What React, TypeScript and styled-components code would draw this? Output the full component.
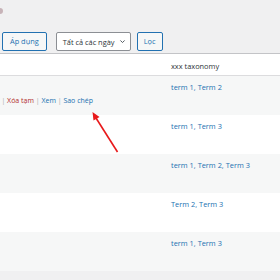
import React from 'react';
import styled, { createGlobalStyle } from 'styled-components';

const GlobalStyle = createGlobalStyle`
  html, body {
    margin: 0;
    padding: 0;
    background: #f0f0f1;
    overflow: hidden;
  }
  body {
    width: 280px;
    height: 280px;
    font-family: "Open Sans", "Noto Sans", "Liberation Sans", sans-serif;
    font-size: 7.4px;
    color: #3c434a;
  }
`;

const Page = styled.div`
  position: relative;
  width: 280px;
  height: 280px;
  overflow: hidden;
`;

const TopStrip = styled.div`
  height: 32px;
  position: relative;
`;

const Bubble = styled.span`
  position: absolute;
  left: -4px;
  top: 8px;
  width: 7px;
  height: 6px;
  border-radius: 3px;
  background: #c7b3b8;
`;

const Toolbar = styled.div`
  display: flex;
  align-items: center;
  padding-left: 2px;
  height: 19px;
  margin-bottom: 2px;
`;

const Button = styled.button<{ gapLeft?: number }>`
  height: 19px;
  box-sizing: border-box;
  padding: 0 ${p => (p.gapLeft ? 6 : 7)}px;
  margin-left: ${p => p.gapLeft ?? 0}px;
  border: 1px solid #2271b1;
  border-radius: 2px;
  background: #f6f7f7;
  color: #2271b1;
  font-family: inherit;
  font-size: 7.4px;
  line-height: 17px;
  white-space: nowrap;
`;

const Select = styled.div`
  display: flex;
  align-items: center;
  justify-content: space-between;
  height: 19px;
  width: 75px;
  box-sizing: border-box;
  margin-left: 9px;
  padding: 0 4px 0 6px;
  border: 1px solid #8c8f94;
  border-radius: 2px;
  background: #fff;
  color: #2c3338;
  white-space: nowrap;
`;

const Table = styled.div`
  background: #fff;
  border-top: 1px solid #c3c4c7;
  margin-left: -120px;
`;

const HeaderRow = styled.div`
  display: grid;
  grid-template-columns: 286px 1fr;
  height: 21px;
  border-bottom: 1px solid #dcdcde;
`;

const HeaderCell = styled.div`
  padding: 7px 5px 0;
  line-height: 10px;
  color: #2c3338;
`;

const Row = styled.div<{ striped: boolean; h: number }>`
  display: grid;
  grid-template-columns: 286px 1fr;
  height: ${p => p.h}px;
  background: ${p => (p.striped ? '#f6f7f7' : '#fff')};
`;

const Cell = styled.div`
  padding: 6px 5px 0;
  line-height: 10px;
`;

const TermLinks = styled.span`
  color: #2271b1;
`;

const Actions = styled.div`
  margin-top: 4px;
  text-align: right;
  padding-right: 68px;
  white-space: nowrap;
  font-size: 7px;
  color: #a7aaad;
`;

const ActionLink = styled.span<{ danger?: boolean }>`
  color: ${p => (p.danger ? '#b32d2e' : '#2271b1')};
`;

const Arrow = styled.svg`
  position: absolute;
  left: 0;
  top: 0;
  pointer-events: none;
`;

const rows = [
  { terms: 'term 1, Term 2', h: 39, actions: true },
  { terms: 'term 1, Term 3', h: 39 },
  { terms: 'term 1, Term 2, Term 3', h: 39 },
  { terms: 'Term 2, Term 3', h: 39 },
  { terms: 'term 1, Term 3', h: 39 },
];

export default function App() {
  return (
    <Page>
      <GlobalStyle />
      <TopStrip>
        <Bubble />
      </TopStrip>
      <Toolbar>
        <Button>Áp dụng</Button>
        <Select>
          <span>Tất cả các ngày</span>
          <svg width="7" height="7" viewBox="0 0 10 10">
            <path d="M2 3.5 L5 6.5 L8 3.5" fill="none" stroke="#50575e" strokeWidth="1.4" />
          </svg>
        </Select>
        <Button gapLeft={6}>Lọc</Button>
      </Toolbar>
      <Table>
        <HeaderRow>
          <HeaderCell />
          <HeaderCell>xxx taxonomy</HeaderCell>
        </HeaderRow>
        {rows.map((r, i) => (
          <Row key={i} striped={i % 2 === 0} h={r.h}>
            <Cell>
              {r.actions && (
                <>
                  <div>&nbsp;</div>
                  <Actions>
                    <ActionLink>Sửa nhanh</ActionLink> | <ActionLink danger>Xóa tạm</ActionLink> |{' '}
                    <ActionLink>Xem</ActionLink> | <ActionLink>Sao chép</ActionLink>
                  </Actions>
                </>
              )}
            </Cell>
            <Cell>
              <TermLinks>{r.terms}</TermLinks>
            </Cell>
          </Row>
        ))}
      </Table>
      <Arrow width="280" height="280" viewBox="0 0 280 280">
        <line x1="117.5" y1="152" x2="96" y2="118" stroke="#e8191b" strokeWidth="1.6" />
        <polygon points="92.5,112 99.5,117 93.5,120.5" fill="#e8191b" />
      </Arrow>
    </Page>
  );
}
